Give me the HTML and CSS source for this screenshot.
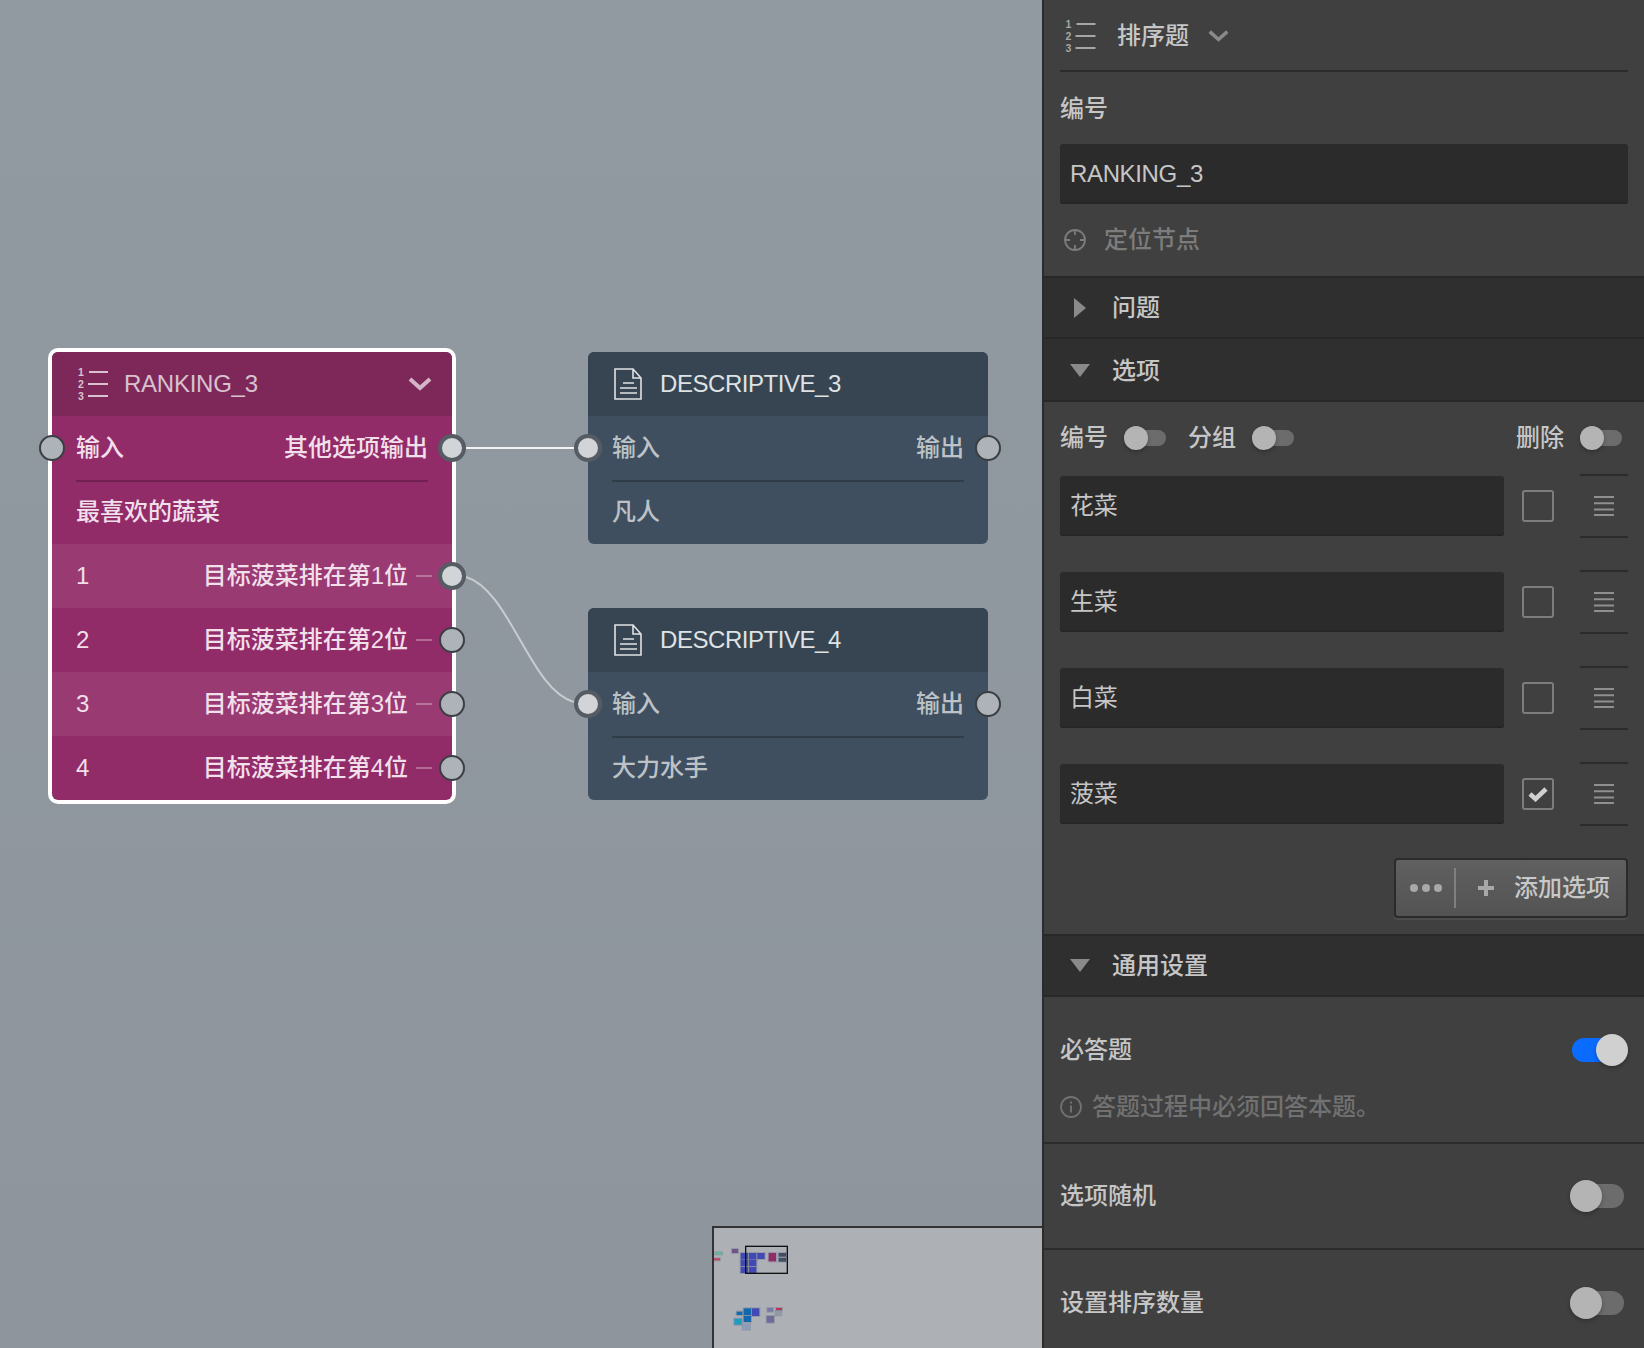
FILE: index.html
```html
<!DOCTYPE html>
<html lang="zh-CN">
<head>
    <meta charset="UTF-8">
    <meta name="viewport" content="width=device-width, initial-scale=1.0">
    <title>排序题</title>
    <link rel="stylesheet" href="styles.css">
</head>
<body>
    <svg class="icon-defs" width="0" height="0">
        <defs>
            <symbol id="icon-ranking" viewBox="0 0 30 32">
                <text x="0" y="8" class="rank-num">1</text>
                <text x="0" y="20" class="rank-num">2</text>
                <text x="0" y="32" class="rank-num">3</text>
                <path d="M11 4h19M10 16h20M10 28h20" fill="none" stroke="currentColor" stroke-width="2"/>
            </symbol>
            <symbol id="icon-doc" viewBox="0 0 28 32">
                <path d="M1 1h18l8 9v21H1zM19 1v9h8M9 15h11M6 20h17M6 25h17" fill="none" stroke="currentColor" stroke-width="1.6"/>
            </symbol>
            <symbol id="icon-chevron" viewBox="0 0 24 14">
                <path d="M2 2l10 9 10-9" fill="none" stroke="currentColor" stroke-width="4"/>
            </symbol>
            <symbol id="icon-lines" viewBox="0 0 20 20">
                <path d="M0 1h20M0 7.300h20M0 13.600h20M0 19h20" fill="none" stroke="currentColor" stroke-width="2"/>
            </symbol>
        </defs>
    </svg>

    <main class="canvas">
        <svg class="wires" width="1042" height="1348">
            <path d="M466 448H574" class="wire"/>
            <path d="M466 577C510 590 530 690 574 702" class="wire wire-soft"/>
        </svg>

        <section class="node node-ranking selected">
            <header class="node-head">
                <svg class="node-icon"><use href="#icon-ranking"/></svg>
                <span class="node-title">RANKING_3</span>
                <svg class="node-chevron"><use href="#icon-chevron"/></svg>
            </header>
            <div class="node-ports">
                <i class="port port-left"></i>
                <span>输入</span>
                <span>其他选项输出</span>
                <i class="port port-right active"></i>
            </div>
            <div class="node-text">最喜欢的蔬菜</div>
            <div class="node-option alt">
                <span>1</span><span class="option-name">目标菠菜排在第1位</span><b class="dash"></b>
                <i class="port port-right active"></i>
            </div>
            <div class="node-option">
                <span>2</span><span class="option-name">目标菠菜排在第2位</span><b class="dash"></b>
                <i class="port port-right"></i>
            </div>
            <div class="node-option alt">
                <span>3</span><span class="option-name">目标菠菜排在第3位</span><b class="dash"></b>
                <i class="port port-right"></i>
            </div>
            <div class="node-option">
                <span>4</span><span class="option-name">目标菠菜排在第4位</span><b class="dash"></b>
                <i class="port port-right"></i>
            </div>
        </section>

        <section class="node node-desc node-desc-3">
            <header class="node-head">
                <svg class="node-icon"><use href="#icon-doc"/></svg>
                <span class="node-title">DESCRIPTIVE_3</span>
            </header>
            <div class="node-ports">
                <i class="port port-left active"></i>
                <span>输入</span>
                <span>输出</span>
                <i class="port port-right"></i>
            </div>
            <div class="node-text">凡人</div>
        </section>

        <section class="node node-desc node-desc-4">
            <header class="node-head">
                <svg class="node-icon"><use href="#icon-doc"/></svg>
                <span class="node-title">DESCRIPTIVE_4</span>
            </header>
            <div class="node-ports">
                <i class="port port-left active"></i>
                <span>输入</span>
                <span>输出</span>
                <i class="port port-right"></i>
            </div>
            <div class="node-text">大力水手</div>
        </section>

        <div class="minimap">
            <svg width="328" height="120" viewBox="42 54 984 360">
                <g class="mini-nodes">
                    <rect x="46" y="127" width="20" height="6" fill="#4fc28f"/>
                    <rect x="42" y="145" width="18" height="6" fill="#c0425f"/>
                    <rect x="96" y="117" width="18" height="12" fill="#6f5585"/>
                    <g fill="#3f4ab5">
                        <rect x="122" y="129" width="22" height="20"/>
                        <rect x="147" y="129" width="22" height="20"/>
                        <rect x="172" y="129" width="22" height="18"/>
                        <rect x="122" y="150" width="22" height="18"/>
                        <rect x="147" y="150" width="22" height="18"/>
                        <rect x="122" y="171" width="22" height="18"/>
                        <rect x="147" y="171" width="22" height="18"/>
                    </g>
                    <rect x="206" y="129" width="22" height="25" fill="#922c69"/>
                    <rect x="236" y="129" width="22" height="11" fill="#3f4f5f"/>
                    <rect x="236" y="144" width="22" height="11" fill="#3f4f5f"/>
                    <rect x="110" y="305" width="17" height="10" fill="#0f6cb0"/>
                    <rect x="131" y="295" width="22" height="20" fill="#1268ad"/>
                    <rect x="156" y="295" width="22" height="23" fill="#3f4ab5"/>
                    <rect x="131" y="318" width="22" height="18" fill="#1268ad"/>
                    <rect x="103" y="326" width="22" height="18" fill="#1b9cc0"/>
                    <rect x="128" y="343" width="22" height="16" fill="#8a9dbb"/>
                    <rect x="202" y="294" width="17" height="11" fill="#767aa6"/>
                    <rect x="228" y="294" width="18" height="6" fill="#c0304f"/>
                    <rect x="227" y="303" width="17" height="13" fill="#8f9aa2"/>
                    <rect x="200" y="318" width="22" height="20" fill="#6f6b98"/>
                </g>
                <rect x="137" y="109" width="125" height="81" class="mini-view"/>
            </svg>
        </div>
    </main>

    <aside class="panel">
        <div class="panel-head">
            <svg class="panel-icon"><use href="#icon-ranking"/></svg>
            <span class="panel-title">排序题</span>
            <svg class="panel-chevron"><use href="#icon-chevron"/></svg>
        </div>
        <div class="field-label">编号</div>
        <div class="text-input">RANKING_3</div>
        <div class="locate">
            <svg class="locate-icon" width="22" height="22" viewBox="0 0 22 22">
                <circle cx="11" cy="11" r="10" fill="none" stroke="currentColor" stroke-width="1.800"/>
                <path d="M11 1v5M11 16v5M1 11h5M16 11h5" stroke="currentColor" stroke-width="1.800"/>
            </svg>
            <span>定位节点</span>
        </div>

        <div class="section-head first"><i class="tri-right"></i><span>问题</span></div>
        <div class="section-head"><i class="tri-down"></i><span>选项</span></div>

        <div class="options">
            <div class="options-bar">
                <span>编号</span><i class="toggle"></i>
                <span class="bar-group">分组</span><i class="toggle"></i>
                <span class="bar-delete">删除</span><i class="toggle"></i>
            </div>
            <div class="option-row">
                <div class="text-input">花菜</div>
                <i class="checkbox"></i>
                <div class="handle"><svg class="handle-lines"><use href="#icon-lines"/></svg></div>
            </div>
            <div class="option-row">
                <div class="text-input">生菜</div>
                <i class="checkbox"></i>
                <div class="handle"><svg class="handle-lines"><use href="#icon-lines"/></svg></div>
            </div>
            <div class="option-row">
                <div class="text-input">白菜</div>
                <i class="checkbox"></i>
                <div class="handle"><svg class="handle-lines"><use href="#icon-lines"/></svg></div>
            </div>
            <div class="option-row">
                <div class="text-input">菠菜</div>
                <i class="checkbox">
                    <svg width="20" height="16" viewBox="0 0 20 16"><path d="M2 8l5.500 5L18 3" fill="none" stroke="#d0d0d0" stroke-width="4.500"/></svg>
                </i>
                <div class="handle"><svg class="handle-lines"><use href="#icon-lines"/></svg></div>
            </div>
            <div class="add-wrap">
                <button type="button" class="add-btn">
                    <span class="add-dots"><i></i><i></i><i></i></span>
                    <span class="add-main">
                        <svg width="16" height="16" viewBox="0 0 16 16"><path d="M8 0v16M0 8h16" stroke="#a8a8a8" stroke-width="4"/></svg>
                        <span>添加选项</span>
                    </span>
                </button>
            </div>
        </div>

        <div class="section-head section-top"><i class="tri-down"></i><span>通用设置</span></div>

        <div class="setting setting-required">
            <div class="setting-line">
                <span>必答题</span><i class="toggle big on"></i>
            </div>
            <div class="setting-note">
                <svg width="22" height="22" viewBox="0 0 22 22">
                    <circle cx="11" cy="11" r="10" fill="none" stroke="currentColor" stroke-width="1.800"/>
                    <path d="M11 9.500v7M11 5.500v2" stroke="currentColor" stroke-width="2"/>
                </svg>
                <span>答题过程中必须回答本题。</span>
            </div>
        </div>
        <div class="setting setting-plain">
            <span>选项随机</span><i class="toggle big"></i>
        </div>
        <div class="setting setting-plain no-line">
            <span>设置排序数量</span><i class="toggle big"></i>
        </div>
    </aside>
</body>
</html>
```

FILE: styles.css
```css
* {
    box-sizing: border-box;
}
html, body {
    margin: 0;
    height: 100%;
}
body {
    display: flex;
    height: 1348px;
    overflow: hidden;
    font-family: "Liberation Sans", "Noto Sans CJK SC", sans-serif;
    font-size: 24px;
    font-weight: 500;
    line-height: 32px;
    background-color: #404040;
}
.icon-defs {
    position: absolute;
}
.rank-num {
    font-size: 10.5px;
    font-weight: bold;
    fill: currentColor;
}

/* canvas */
.canvas {
    position: relative;
    width: 1042px;
    flex-shrink: 0;
    overflow: hidden;
    background: linear-gradient(#929aa1, #8e959c);
}
.wires {
    position: absolute;
    left: 0;
    top: 0;
}
.wire {
    fill: none;
    stroke: #f2f3f4;
    stroke-width: 2;
}
.wire-soft {
    stroke: #c9cccf;
}

/* nodes */
.node {
    position: absolute;
    width: 400px;
    border-radius: 6px;
}
.node-ranking {
    left: 52px;
    top: 352px;
    background-color: #922c69;
    color: #f1dfea;
}
.node-ranking.selected {
    box-shadow: 0 0 0 4px #fff;
}
.node-desc {
    left: 588px;
    background-color: #3f4f5f;
    color: #bdc2c7;
}
.node-desc-3 {
    top: 352px;
}
.node-desc-4 {
    top: 608px;
}
.node-head {
    display: flex;
    align-items: center;
    height: 64px;
    padding: 0 20px 0 26px;
    border-radius: 6px 6px 0 0;
}
.node-ranking .node-head {
    background-color: #7e2859;
    color: #d8c2cf;
}
.node-desc .node-head {
    background-color: #374552;
    color: #dfe2e4;
}
.node-icon {
    width: 30px;
    height: 32px;
    margin-right: 16px;
}
.node-desc .node-icon {
    width: 28px;
    margin-right: 18px;
}
.node-title {
    flex: 1;
    letter-spacing: -0.25px;
}
.node-desc .node-title {
    letter-spacing: -0.45px;
}
.node-chevron {
    width: 24px;
    height: 14px;
    color: #d4b5c8;
}
.node-ports {
    position: relative;
    display: flex;
    justify-content: space-between;
    align-items: center;
    height: 64px;
    margin: 0 24px;
    box-shadow: 0 2px 0 #722052;
}
.node-desc .node-ports {
    box-shadow: 0 2px 0 #303c48;
}
.node-text {
    display: flex;
    align-items: center;
    height: 64px;
    padding: 0 24px;
}
.node-option {
    position: relative;
    display: flex;
    align-items: center;
    height: 64px;
    padding: 0 20px 0 24px;
}
.node-option.alt {
    background-color: #993a72;
}
.node-option:last-child {
    border-radius: 0 0 6px 6px;
}
.option-name {
    margin-left: auto;
}
.dash {
    width: 16px;
    height: 2px;
    margin-left: 8px;
    background-color: rgba(255, 255, 255, 0.3);
}
.port {
    position: absolute;
    top: 50%;
    width: 26px;
    height: 26px;
    margin-top: -13px;
    border: 2px solid #3b3e43;
    border-radius: 50%;
    background-color: #aeb3ba;
}
.port.active {
    width: 28px;
    height: 28px;
    margin-top: -14px;
    border: 4px solid #555c63;
    background-color: #d2d5d8;
}
.node-ports .port-left {
    left: -37px;
}
.node-ports .port-left.active {
    left: -38px;
}
.node-ports .port-right {
    right: -37px;
}
.node-ports .port-right.active {
    right: -38px;
}
.node-option .port-right {
    right: -13px;
}
.node-option .port-right.active {
    right: -14px;
}

/* minimap */
.minimap {
    position: absolute;
    right: 0;
    bottom: 0;
    width: 330px;
    height: 122px;
    border: 2px solid #333;
    border-right: 0;
    border-bottom: 0;
    background-color: #adb0b5;
}
.minimap svg {
    display: block;
}
.mini-nodes rect {
    stroke: rgba(120, 125, 150, 0.45);
    stroke-width: 6;
    paint-order: stroke;
}
.mini-view {
    fill: none;
    stroke: #111;
    stroke-width: 4;
}

/* right panel */
.panel {
    width: 602px;
    flex-shrink: 0;
    border-left: 2px solid #2b2b2b;
    background-color: #404040;
    color: #c6c6c6;
}
.panel-head {
    display: flex;
    align-items: center;
    height: 72px;
    margin: 0 16px;
    padding: 1px 0 0 5px;
    border-bottom: 2px solid #2c2c2c;
}
.panel-icon {
    width: 31px;
    height: 32px;
    margin-right: 21px;
    color: #a6a6a6;
}
.panel-chevron {
    width: 21px;
    height: 14px;
    margin-left: 19px;
    color: #8a8a8a;
}
.field-label {
    height: 72px;
    margin: 0 16px;
    padding-top: 21px;
}
.text-input {
    display: flex;
    align-items: center;
    height: 60px;
    margin: 0 16px;
    padding: 0 10px;
    border-radius: 3px;
    box-shadow: inset 0 -2px 0 #262626;
    background-color: #2b2b2b;
    font-weight: 400;
    letter-spacing: -0.35px;
}
.locate {
    display: flex;
    align-items: center;
    height: 72px;
    padding-left: 20px;
    color: #7c7c7c;
}
.locate span {
    margin-left: 18px;
}
.section-head {
    display: flex;
    align-items: center;
    height: 63px;
    padding-top: 2px;
    border-bottom: 2px solid #282828;
    background-color: #2f2f2f;
}
.section-head span {
    margin-left: 22px;
}
.section-head.first,
.section-top {
    padding-top: 0;
    border-top: 2px solid #282828;
}
.tri-right {
    width: 0;
    height: 0;
    margin-left: 30px;
    margin-right: 4px;
    border-left: 12px solid #8a8a8a;
    border-top: 10px solid transparent;
    border-bottom: 10px solid transparent;
}
.tri-down {
    width: 0;
    height: 0;
    margin-left: 26px;
    border-top: 13px solid #8a8a8a;
    border-left: 10px solid transparent;
    border-right: 10px solid transparent;
}
.options {
    height: 532px;
    padding: 0 16px;
}
.options-bar {
    display: flex;
    align-items: center;
    height: 74px;
    padding-bottom: 2px;
}
.options-bar .toggle {
    margin-left: 16px;
}
.bar-group {
    margin-left: 22px;
}
.bar-delete {
    margin-left: auto;
}
.options-bar .toggle:last-child {
    margin-right: 6px;
}
.option-row {
    display: flex;
    align-items: center;
    height: 60px;
    margin-bottom: 36px;
}
.option-row .text-input {
    flex: 1;
    margin: 0;
}
.checkbox {
    display: flex;
    align-items: center;
    justify-content: center;
    width: 32px;
    height: 32px;
    margin-left: 18px;
    border: 2px solid #7d7d7d;
    border-radius: 3px;
}
.handle {
    display: flex;
    align-items: center;
    justify-content: center;
    width: 48px;
    height: 64px;
    margin-left: 26px;
    border-top: 2px solid #2c2c2c;
    border-bottom: 2px solid #2c2c2c;
}
.handle-lines {
    width: 20px;
    height: 20px;
    color: #8f8f8f;
}
.add-wrap {
    display: flex;
    justify-content: flex-end;
    margin-top: -2px;
}
.add-btn {
    display: flex;
    align-items: center;
    width: 234px;
    height: 60px;
    padding: 0;
    border: 2px solid #2b2b2b;
    border-radius: 4px;
    background: linear-gradient(#606060, #535353);
    box-shadow: 0 2px 0 #4c4c4c;
    color: #c8c8c8;
    font: inherit;
}
.add-dots {
    display: flex;
    align-items: center;
    gap: 4px;
    height: 40px;
    padding: 0 12px 0 14px;
    border-right: 2px solid #808080;
}
.add-dots i {
    width: 8px;
    height: 8px;
    border-radius: 50%;
    background-color: #a8a8a8;
}
.add-main {
    display: flex;
    align-items: center;
    margin-left: 22px;
}
.add-main span {
    margin-left: 20px;
}
.setting {
    padding: 0 16px;
    border-bottom: 2px solid #2c2c2c;
}
.setting-required {
    height: 147px;
}
.setting-line {
    display: flex;
    justify-content: space-between;
    align-items: center;
    height: 104px;
    padding-top: 2px;
}
.setting-note {
    display: flex;
    align-items: center;
    margin-top: -10px;
    color: #717171;
}
.setting-note span {
    margin-left: 10px;
}
.setting-plain {
    display: flex;
    justify-content: space-between;
    align-items: center;
    height: 106px;
}
.no-line {
    border-bottom: 0;
}
.toggle {
    position: relative;
    display: block;
    width: 42px;
    height: 16px;
    border-radius: 8px;
    background-color: #6c6c6c;
}
.toggle::after {
    content: "";
    position: absolute;
    left: 0;
    top: -4px;
    width: 24px;
    height: 24px;
    border-radius: 50%;
    background-color: #b4b4b4;
    box-shadow: 0 2px 4px rgba(0, 0, 0, 0.25);
}
.toggle.big {
    width: 54px;
    height: 24px;
    border-radius: 12px;
    margin-right: 4px;
}
.toggle.big::after {
    width: 32px;
    height: 32px;
}
.toggle.on {
    width: 48px;
    margin-right: 0;
    background-color: #0a6cff;
    transform: translateX(-8px);
}
.toggle.on::after {
    left: auto;
    right: -8px;
    background-color: #d0d0d0;
}
```
